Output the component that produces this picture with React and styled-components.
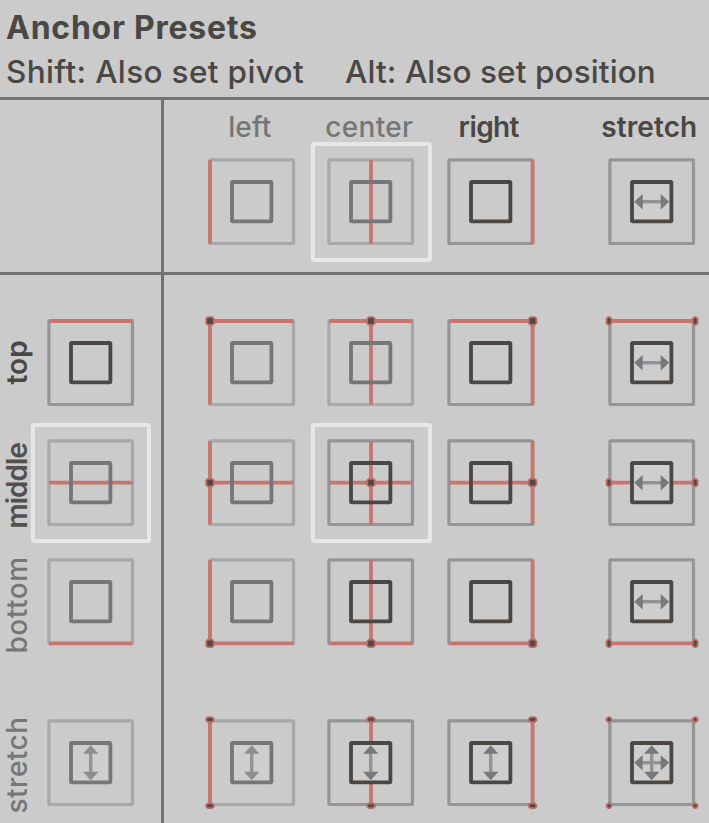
import React from "react";
import styled, { createGlobalStyle } from "styled-components";

const GlobalStyle = createGlobalStyle`
  * { box-sizing: border-box; }
  body { margin: 0; background: #cbcbcb; overflow: hidden; }
`;

const dark = "#4a4744";
const dim = "#757678";
const rule = "#707274";
const red = "#c8756f";

const Panel = styled.main`
  width: 709px;
  height: 823px;
  overflow: hidden;
  display: flex;
  flex-direction: column;
  background: #cbcbcb;
  color: ${dark};
  font-family: Inter, "Liberation Sans", sans-serif;
`;

const Header = styled.header`
  flex: none;
  height: 100px;
  padding: 10px 0 0 6px;
  border-bottom: 3px solid ${rule};
`;

const Title = styled.h1`
  margin: 0;
  font-size: 32px;
  line-height: 36px;
  font-weight: 700;
  letter-spacing: 0.75px;
  white-space: nowrap;
`;

const Hints = styled.div`
  display: flex;
  margin-top: 8px;
  font-size: 31.5px;
  line-height: 36px;
  font-weight: 500;
  white-space: nowrap;
`;

const Hint = styled.span`
  flex: none;
  width: ${(p) => p.$width}px;
  letter-spacing: ${(p) => p.$spacing}px;
`;

const ColumnHeads = styled.section`
  flex: none;
  display: flex;
  height: 175px;
  border-bottom: 3px solid ${rule};
`;

const Body = styled.section`
  flex: 1;
  display: flex;
  min-height: 0;
`;

const Side = styled.div`
  flex: none;
  width: 164px;
  border-right: 3px solid ${rule};
  padding-top: ${(p) => p.$top || 0}px;
`;

const Cells = styled.div`
  flex: none;
  display: grid;
  grid-template-columns: 119.5px 119.5px 119.5px 119.5px;
  grid-template-rows: ${(p) => p.$rows};
  padding: ${(p) => p.$top || 0}px 0 0 27.5px;

  & > :nth-child(4n) { margin-left: 42px; margin-right: -42px; }
`;

const SideRow = styled.div`
  display: flex;
  height: 119.5px;
  margin-top: ${(p) => (p.$spaced ? 41.5 : 0)}px;
`;

const SideLabel = styled.div`
  flex: none;
  width: 34px;
  margin-right: -3.5px;
  height: 119.5px;
  display: flex;
  align-items: center;
  justify-content: center;
  writing-mode: vertical-rl;
  transform: rotate(180deg);
  padding-bottom: ${(p) => p.$shift}px;
  font-size: 28px;
  line-height: 34px;
  font-weight: ${(p) => p.$weight || 500};
  letter-spacing: ${(p) => p.$spacing || 0}px;
  white-space: nowrap;
  color: ${(p) => p.$color};
`;

const ColumnLabel = styled.div`
  display: flex;
  justify-content: center;
  padding: 11px ${(p) => p.$shift}px 0 0;
  font-size: 28px;
  line-height: 32px;
  font-weight: ${(p) => p.$weight || 500};
  letter-spacing: ${(p) => p.$spacing || 0}px;
  color: ${(p) => p.$color};
`;

const Tile = styled.div`
  width: 120.5px;
  height: 120.5px;
  border: 4px solid ${(p) => (p.$selected ? "#e7e7e7" : "transparent")};
  border-radius: 3px;
`;

const Drawing = styled.svg`
  display: block;
  width: 120px;
  height: 120px;
  margin: -4px;
  overflow: visible;
`;

const xAt = { left: 18, center: 60, right: 101.6 };
const yAt = { top: 18, middle: 59.6, bottom: 101.4 };

function Dot({ x, y, w = 9, h = 9 }) {
  const a = w / 2;
  const b = h / 2;
  const c = 2.2;
  const points = [
    [x - a + c, y - b], [x + a - c, y - b], [x + a, y - b + c], [x + a, y + b - c],
    [x + a - c, y + b], [x - a + c, y + b], [x - a, y + b - c], [x - a, y - b + c],
  ].join(" ");
  return (
    <g>
      <polygon points={points} fill="#b96e69" />
      <rect x={x - a + 1.8} y={y - b + 1.8} width={w - 3.6} height={h - 3.6} rx="1.3" fill="#5b4643" />
    </g>
  );
}

function Arrow({ vertical, faint }) {
  return (
    <g transform={vertical ? "rotate(90 59.7 59.7)" : undefined}>
      <path d="M45 59.7H75" stroke="#929396" strokeWidth="3.4" />
      <path d="M42.2 59.7L50.7 52V67.4ZM77.2 59.7L68.7 52V67.4Z" fill={faint ? "#8c8d90" : "#77797c"} />
    </g>
  );
}

function Preset({ h, v, faded, selected }) {
  const x = xAt[h];
  const y = yAt[v];
  const both = h && v;
  const inner = faded ? "#747678" : dark;
  const stretched = h === "stretch" || v === "stretch";
  const dots = [];
  if (both) {
    const xs = h === "stretch" ? [17, 103.2] : [x];
    const ys = v === "stretch" ? [16.6, 102.8] : [y];
    xs.forEach((dx) => ys.forEach((dy) => dots.push([dx, dy])));
  }
  return (
    <Tile $selected={selected}>
      <Drawing viewBox="0 0 120 120">
        <rect x="17.9" y="17.9" width="83.6" height="83.6" rx="0.6" fill="none" stroke={faded ? "#aaa7a8" : "#949597"} strokeWidth="3.2" />
        {y && <path d={`M18 ${y}H101.5`} stroke={red} strokeWidth="3.8" />}
        {x && <path d={`M${x} 18V101.5`} stroke={red} strokeWidth="3.8" />}
        <rect x="40" y="40" width="39.4" height="39.4" rx="0.8" fill={stretched ? "#cecece" : "none"} stroke={inner} strokeWidth="3.8" />
        {h === "stretch" && <Arrow />}
        {v === "stretch" && <Arrow vertical faint={faded} />}
        {dots.map(([dx, dy]) => (
          <Dot
            key={`${dx}-${dy}`}
            x={dx}
            y={dy}
            w={h === "stretch" ? 6.6 : 9.4}
            h={v === "stretch" ? 6.6 : 9.4}
          />
        ))}
      </Drawing>
    </Tile>
  );
}

const columns = [
  { id: "left", color: dim, shift: 3, spacing: 0.1 },
  { id: "center", color: dim, shift: 3, spacing: 0.3 },
  { id: "right", color: dark, shift: 3, weight: 600, spacing: -0.6 },
  { id: "stretch", color: dark, shift: 5, weight: 600, spacing: 0.1 },
];

const rows = [
  { id: "top", color: dark, shift: 0, weight: 600 },
  { id: "middle", color: "#525150", shift: 6, weight: 600, spacing: -1 },
  { id: "bottom", color: dim, shift: 6, spacing: 0.5 },
  { id: "stretch", color: dim, shift: 5, spacing: 0.5 },
];

export default function App() {
  return (
    <>
      <GlobalStyle />
      <Panel>
        <Header>
          <Title>Anchor Presets</Title>
          <Hints>
            <Hint $width={339} $spacing={0.35}>Shift: Also set pivot</Hint>
            <Hint $width={320} $spacing={0.1}>Alt: Also set position</Hint>
          </Hints>
        </Header>
        <ColumnHeads>
          <Side />
          <Cells $rows="41.5px 120px">
            {columns.map((c) => (
              <ColumnLabel key={c.id} $color={c.color} $shift={c.shift} $spacing={c.spacing} $weight={c.weight}>{c.id}</ColumnLabel>
            ))}
            {columns.map((c) => (
              <Preset key={c.id} h={c.id} faded={c.id === "left" || c.id === "center"} selected={c.id === "center"} />
            ))}
          </Cells>
        </ColumnHeads>
        <Body>
          <Side $top={28}>
            {rows.map((r) => (
              <SideRow key={r.id} $spaced={r.id === "stretch"}>
                <SideLabel $color={r.color} $shift={r.shift} $spacing={r.spacing} $weight={r.weight}>{r.id}</SideLabel>
                <Preset v={r.id} faded={r.id !== "top"} selected={r.id === "middle"} />
              </SideRow>
            ))}
          </Side>
          <Cells $top={28} $rows="119.5px 119.5px 161px 119.5px">
            {rows.map((r) =>
              columns.map((c) => (
                <Preset
                  key={`${r.id}-${c.id}`}
                  h={c.id}
                  v={r.id}
                  faded={c.id === "left" || (c.id === "center" && r.id === "top")}
                  selected={c.id === "center" && r.id === "middle"}
                />
              ))
            )}
          </Cells>
        </Body>
      </Panel>
    </>
  );
}
